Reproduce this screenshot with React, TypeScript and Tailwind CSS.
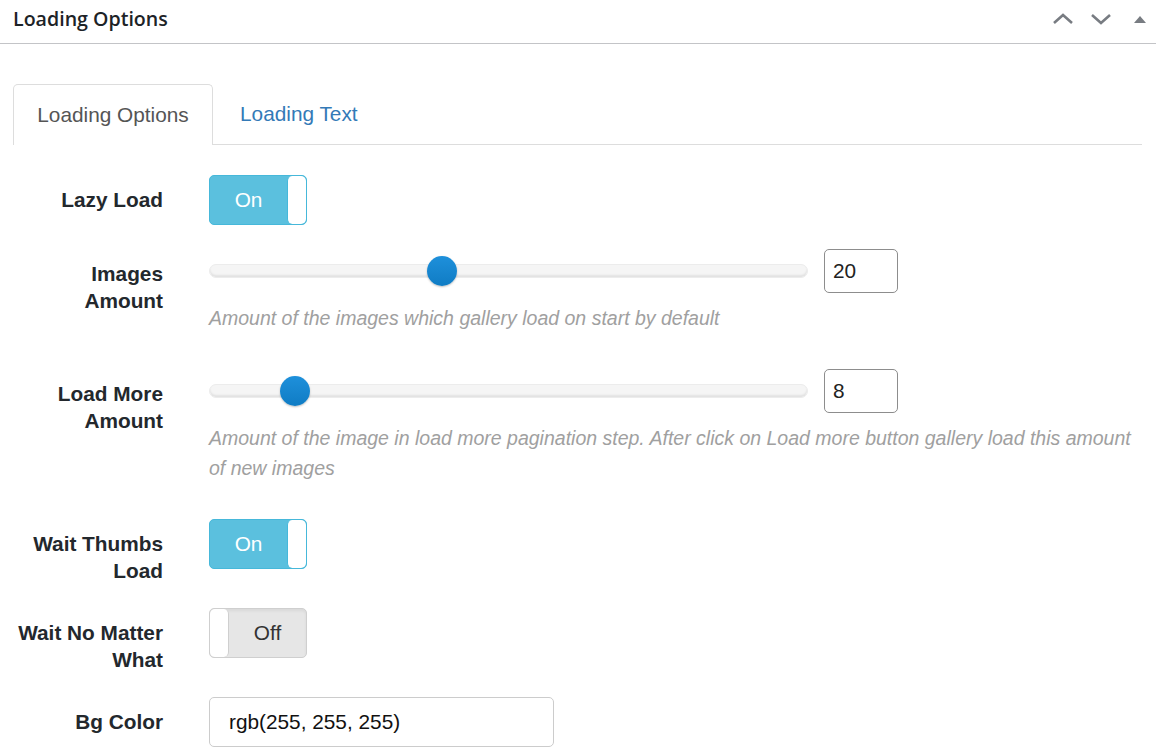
import React from "react";

function Toggle({ on }: { on: boolean }) {
  if (on) {
    return (
      <div className="flex h-[50px] w-[98px] overflow-hidden rounded-[5px] border border-[#46b8da] bg-[#5bc0de]">
        <div className="flex flex-1 items-center justify-center text-[20.8px] text-white">On</div>
        <div className="w-[19px] rounded-[5px] border-l border-[#46b8da] bg-white" />
      </div>
    );
  }
  return (
    <div className="flex h-[50px] w-[98px] overflow-hidden rounded-[5px] border border-[#cfcfcf] bg-[#e6e6e6] shadow-[inset_0_2px_3px_rgba(0,0,0,0.06)]">
      <div className="w-[19px] rounded-[5px] border-r border-[#cfcfcf] bg-white" />
      <div className="flex flex-1 items-center justify-center text-[20.8px] text-[#333]">Off</div>
    </div>
  );
}

function Slider({ pos, value }: { pos: number; value: string }) {
  return (
    <div className="flex h-[44px] items-center">
      <div className="relative h-[14px] w-[599px] rounded-full border border-[#ececec] bg-[#f5f5f5] shadow-[inset_0_-2px_2px_rgba(0,0,0,0.08)]">
        <div
          className="absolute top-1/2 h-[30px] w-[30px] -translate-x-1/2 -translate-y-1/2 rounded-full bg-gradient-to-b from-[#1e90db] to-[#0f7cc4] shadow-[0_1px_2px_rgba(0,0,0,0.25)]"
          style={{ left: pos }}
        />
      </div>
      <div className="ml-[16px] flex h-[44px] w-[74px] items-center rounded-[5px] border border-[#8d8d8d] bg-white px-[8px] text-[20.8px] text-[#222]">
        {value}
      </div>
    </div>
  );
}

function Label({ children }: { children: React.ReactNode }) {
  return (
    <div className="w-[163px] shrink-0 pt-[11px] text-right text-[20.8px] font-bold leading-[27px] text-[#23282d]">
      {children}
    </div>
  );
}

function Desc({ children }: { children: React.ReactNode }) {
  return (
    <div className="mb-[12px] mt-[10px] text-[19.5px] italic leading-[30px] text-[#a0a0a0]">{children}</div>
  );
}

export default function App() {
  return (
    <div className="min-h-[756px] w-[1156px] bg-white font-['Liberation_Sans',Arial,sans-serif]">
      <div className="flex h-[44px] items-center justify-between border-b border-[#c3c4c7] pl-[13px] pr-[10px]">
        <div className="pb-[6px] font-['Open_Sans',sans-serif] text-[19.6px] font-semibold text-[#1d2327]">
          Loading Options
        </div>
        <div className="flex items-center pb-[6px] text-[#787c82]">
          <svg width="24" height="24" viewBox="0 0 24 24" className="mr-[14px]">
            <path d="M3 16 L12 8 L21 16" fill="none" stroke="currentColor" strokeWidth="2.6" />
          </svg>
          <svg width="24" height="24" viewBox="0 0 24 24" className="mr-[21px]">
            <path d="M3 8 L12 16 L21 8" fill="none" stroke="currentColor" strokeWidth="2.6" />
          </svg>
          <svg width="12" height="12" viewBox="0 0 12 12">
            <path d="M0 10 L6 3 L12 10 Z" fill="currentColor" />
          </svg>
        </div>
      </div>

      <div className="px-[13px] pr-[14px] pt-[40px]">
        <div className="flex h-[61px] items-end border-b border-[#dddddd]">
          <div className="-mb-px flex h-[61px] w-[200px] items-center justify-center rounded-t-[5px] border border-b-0 border-[#dddddd] bg-white text-[20.8px] text-[#555]">
            Loading Options
          </div>
          <div className="flex h-[61px] items-center px-[27px] text-[20.8px] text-[#337ab7]">Loading Text</div>
        </div>
      </div>

      <div className="flex flex-col gap-[24px] pt-[30px]">
        <div className="flex items-start gap-[46px]">
          <Label>Lazy Load</Label>
          <Toggle on />
        </div>

        <div className="flex items-start gap-[46px]">
          <Label>
            Images
            <br />
            Amount
          </Label>
          <div>
            <Slider pos={232} value="20" />
            <Desc>Amount of the images which gallery load on start by default</Desc>
          </div>
        </div>

        <div className="flex items-start gap-[46px]">
          <Label>
            Load More
            <br />
            Amount
          </Label>
          <div className="w-[935px]">
            <Slider pos={85} value="8" />
            <Desc>
              Amount of the image in load more pagination step. After click on Load more button gallery load this amount
              of new images
            </Desc>
          </div>
        </div>

        <div className="flex items-start gap-[46px]">
          <Label>
            Wait Thumbs
            <br />
            Load
          </Label>
          <Toggle on />
        </div>

        <div className="flex items-start gap-[46px]">
          <Label>
            Wait No Matter
            <br />
            What
          </Label>
          <Toggle on={false} />
        </div>

        <div className="flex items-start gap-[46px]">
          <Label>Bg Color</Label>
          <div className="flex h-[50px] w-[345px] items-center rounded-[5px] border border-[#cccccc] bg-white px-[19px] text-[20.8px] text-[#111]">
            rgb(255, 255, 255)
          </div>
        </div>
      </div>
    </div>
  );
}
